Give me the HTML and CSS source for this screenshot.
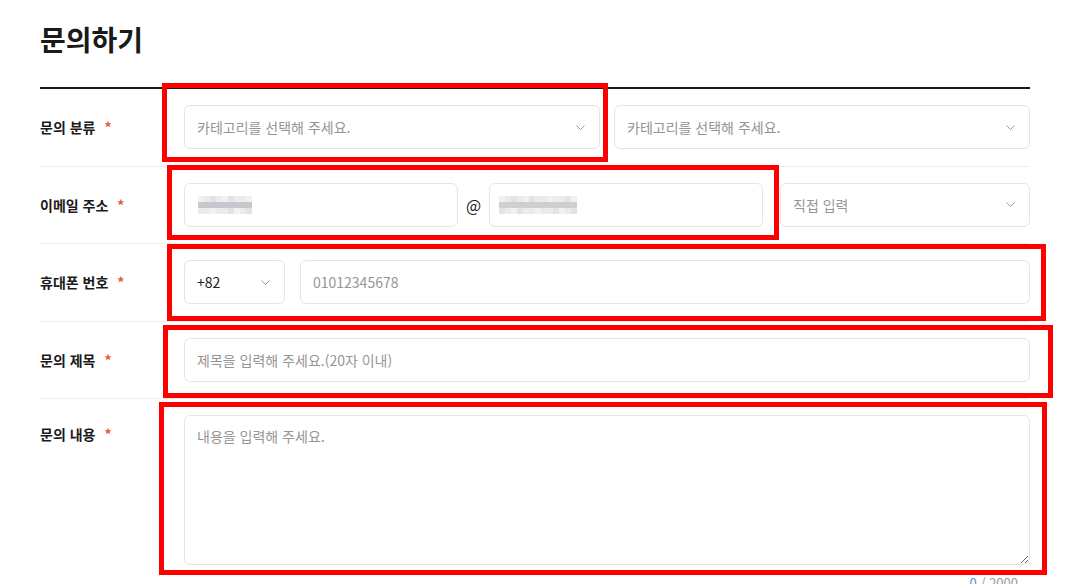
FILE: index.html
```html
<!DOCTYPE html>
<html lang="ko">
<head>
<meta charset="UTF-8">
<meta name="viewport" content="width=device-width, initial-scale=1.0">
<title>문의하기</title>
<link rel="stylesheet" href="styles.css">
</head>
<body>
<div class="page">
  <h1 class="title">문의하기</h1>

  <form class="form">
    <div class="row">
      <label class="label">문의 분류 <em>*</em></label>
      <div class="fields cols">
        <div class="select empty">
          <span>카테고리를 선택해 주세요.</span>
          <svg class="chevron" width="9" height="5" viewBox="0 0 9 5"><path d="M0.5 0.5L4.5 4.5L8.5 0.5"/></svg>
        </div>
        <div class="select empty">
          <span>카테고리를 선택해 주세요.</span>
          <svg class="chevron" width="9" height="5" viewBox="0 0 9 5"><path d="M0.5 0.5L4.5 4.5L8.5 0.5"/></svg>
        </div>
      </div>
    </div>

    <div class="row">
      <label class="label">이메일 주소 <em>*</em></label>
      <div class="fields email">
        <div class="input-box id-box">
          <span class="mosaic m-id">
            <i></i><i></i><i></i><i></i><i></i><i></i><i></i><i></i><i></i>
            <i></i><i></i><i></i><i></i><i></i><i></i><i></i><i></i><i></i>
            <i></i><i></i><i></i><i></i><i></i><i></i><i></i><i></i><i></i>
          </span>
        </div>
        <span class="at">@</span>
        <div class="input-box domain-box">
          <span class="mosaic m-domain">
            <i></i><i></i><i></i><i></i><i></i><i></i><i></i><i></i><i></i><i></i><i></i><i></i><i></i>
            <i></i><i></i><i></i><i></i><i></i><i></i><i></i><i></i><i></i><i></i><i></i><i></i><i></i>
            <i></i><i></i><i></i><i></i><i></i><i></i><i></i><i></i><i></i><i></i><i></i><i></i><i></i>
          </span>
        </div>
        <div class="select empty domain-select">
          <span>직접 입력</span>
          <svg class="chevron" width="9" height="5" viewBox="0 0 9 5"><path d="M0.5 0.5L4.5 4.5L8.5 0.5"/></svg>
        </div>
      </div>
    </div>

    <div class="row">
      <label class="label">휴대폰 번호 <em>*</em></label>
      <div class="fields phone">
        <div class="select code">
          <span>+82</span>
          <svg class="chevron" width="9" height="5" viewBox="0 0 9 5"><path d="M0.5 0.5L4.5 4.5L8.5 0.5"/></svg>
        </div>
        <input class="input" type="text" placeholder="01012345678">
      </div>
    </div>

    <div class="row">
      <label class="label">문의 제목 <em>*</em></label>
      <div class="fields">
        <input class="input" type="text" placeholder="제목을 입력해 주세요.(20자 이내)">
      </div>
    </div>

    <div class="row top">
      <label class="label">문의 내용 <em>*</em></label>
      <div class="fields stack">
        <textarea class="textarea" placeholder="내용을 입력해 주세요."></textarea>
        <p class="counter"><b>0</b> / 2000</p>
      </div>
    </div>
  </form>

  <!-- 캡처 위에 그려진 빨간 표시 -->
  <div class="mark" style="left:162px;top:83px;width:446px;height:79px"></div>
  <div class="mark" style="left:167px;top:165px;width:612px;height:75px"></div>
  <div class="mark" style="left:167px;top:244px;width:879px;height:77px"></div>
  <div class="mark" style="left:163px;top:325px;width:890px;height:73px"></div>
  <div class="mark" style="left:159px;top:402px;width:888px;height:173px"></div>
</div>
</body>
</html>
```

FILE: styles.css
```css
  body {
    margin: 0;
    padding: 0;
    background: #fff;
    color: #222;
    font-family: "Noto Sans CJK KR", "Noto Sans", sans-serif;
    overflow: hidden;
  }
  .page {
    position: relative;
    width: 990px;
    padding: 20px 0 0 40px;
  }
  .title {
    margin: 0 0 28px;
    font-size: 28px;
    line-height: 39px;
    font-weight: 700;
    color: #1a1a1a;
  }

  .form {
    border-top: 2px solid #1a1a1a;
  }
  .row {
    display: flex;
    align-items: center;
    padding: 16px 0 16.5px;
    border-bottom: 1px solid #eee;
  }
  .row.top {
    align-items: flex-start;
    border-bottom: none;
  }
  .label {
    flex: 0 0 144px;
    font-size: 14px;
    font-weight: 700;
    line-height: 20px;
    color: #1a1a1a;
  }
  .row.top .label {
    margin-top: 9px;
  }
  .label em {
    font-style: normal;
    color: #f0552d;
    margin-left: 5px;
  }

  .fields {
    flex: 1;
    display: flex;
  }
  .fields.cols {
    display: grid;
    grid-template-columns: 1fr 1fr;
    column-gap: 14px;
  }
  .fields.phone {
    gap: 15px;
  }
  .fields.stack {
    flex-direction: column;
  }

  .select,
  .input,
  .input-box {
    box-sizing: border-box;
    height: 44px;
    border: 1px solid #e5e5e5;
    border-radius: 6px;
    background: #fff;
    font-family: inherit;
    font-size: 14px;
    color: #222;
  }
  .select {
    display: flex;
    align-items: center;
    justify-content: space-between;
    padding: 0 14px 0 12px;
  }
  .select.empty span {
    color: #959595;
  }
  .select.code {
    flex: 0 0 101px;
  }
  .chevron {
    fill: none;
    stroke: #9a9a9a;
    stroke-width: 1;
  }
  .input {
    flex: 1;
    width: 100%;
    padding: 0 12px;
    outline: none;
  }
  .input::placeholder,
  .textarea::placeholder {
    color: #959595;
  }

  .input-box {
    flex: 0 0 274px;
    display: flex;
    align-items: center;
    padding: 0 12px;
  }
  .at {
    flex: 0 0 31px;
    text-align: center;
    font-size: 16px;
    line-height: 44px;
    color: #222;
  }
  .domain-select {
    flex: 1;
    margin-left: 17px;
  }

  .mosaic {
    display: grid;
    grid-auto-rows: 6px;
  }
  .mosaic i {
    display: block;
    background: #eceaea;
  }
  .m-id {
    grid-template-columns: repeat(9, 6px);
    margin-left: 1px;
  }
  .m-domain {
    grid-template-columns: repeat(13, 6px);
    margin-left: -3px;
  }
  .mosaic i:nth-child(3n) { background: #e4e2e4; }
  .mosaic i:nth-child(4n+1) { background: #f2f1f1; }
  .m-id i:nth-child(n+10):nth-child(-n+18) { background: #c6c8ce; }
  .m-id i:nth-child(11), .m-id i:nth-child(15) { background: #b8b0ae; }
  .m-id i:nth-child(17) { background: #a9adb9; }
  .m-domain i:nth-child(n+14):nth-child(-n+26) { background: #cfcfd3; }
  .m-domain i:nth-child(15), .m-domain i:nth-child(18), .m-domain i:nth-child(19) { background: #a7a4aa; }
  .m-domain i:nth-child(14), .m-domain i:nth-child(25) { background: #d9c9c2; }
  .m-domain i:nth-child(26) { background: #d6e4f2; }

  .textarea {
    box-sizing: border-box;
    width: 100%;
    height: 150px;
    padding: 10px 12px;
    border: 1px solid #e5e5e5;
    border-radius: 6px;
    font-family: inherit;
    font-size: 14px;
    line-height: 20px;
    color: #222;
    resize: vertical;
    outline: none;
  }
  .counter {
    margin: 9px 12px 0 0;
    text-align: right;
    font-size: 13px;
    line-height: 18px;
    color: #999;
  }
  .counter b {
    font-weight: 400;
    color: #4a8fe0;
  }

  .mark {
    position: absolute;
    box-sizing: border-box;
    border: 5px solid #ff0000;
  }
```
